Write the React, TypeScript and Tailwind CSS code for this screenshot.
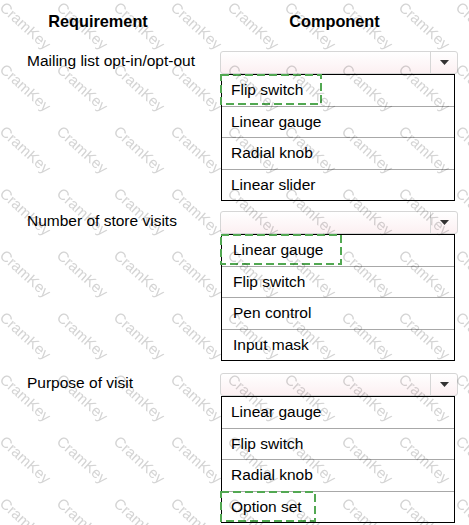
import React from "react";

interface Question {
  label: string;
  options: string[];
  selected: number;
  boxWidth: number;
  indent?: string;
}

const questions: Question[] = [
  {
    label: "Mailing list opt-in/opt-out",
    options: ["Flip switch", "Linear gauge", "Radial knob", "Linear slider"],
    selected: 0,
    boxWidth: 102,
  },
  {
    label: "Number of store visits",
    options: ["Linear gauge", "Flip switch", "Pen control", "Input mask"],
    selected: 0,
    boxWidth: 122,
    indent: "pl-[11px]",
  },
  {
    label: "Purpose of visit",
    options: ["Linear gauge", "Flip switch", "Radial knob", "Option set"],
    selected: 3,
    boxWidth: 96,
  },
];

// watermark grid, "CramKey" tiled diagonally
const marks: { x: number; y: number }[] = [];
for (let r = -1; r < 10; r++) {
  for (let c = -1; c < 10; c++) {
    marks.push({ x: -55 + c * 57, y: -4 + r * 62 });
  }
}

function Combo() {
  return (
    <div className="flex h-[23px] w-[238px] rounded-[3px] border border-[#d6d6d6] bg-linear-to-b from-white to-[#fcf0f2]">
      <div className="flex-1" />
      <div className="flex w-[27px] items-center justify-center border-l border-[#d6d6d6]">
        <svg width="9" height="5" viewBox="0 0 9 5">
          <path d="M0 0 L9 0 L4.5 5 Z" fill="#333" />
        </svg>
      </div>
    </div>
  );
}

function OptionList({ q }: { q: Question }) {
  return (
    <div className="ml-[1px] flex h-[127px] w-[234px] flex-col border border-black">
      {q.options.map((opt, i) => (
        <div
          key={opt}
          className={`relative flex flex-1 items-center ${q.indent ?? "pl-[9px]"} ${
            i > 0 ? "border-t border-[#a8a8a8]" : ""
          }`}
        >
          <span>{opt}</span>
          {i === q.selected && (
            <svg
              className="absolute -left-[2px] -top-[1px]"
              width={q.boxWidth}
              height={31}
            >
              <rect
                x={1}
                y={1}
                width={q.boxWidth - 2}
                height={29}
                fill="none"
                stroke="#52a852"
                strokeWidth={2}
                strokeDasharray="8 4"
              />
            </svg>
          )}
        </div>
      ))}
    </div>
  );
}

export default function App() {
  return (
    <div className="relative h-[525px] w-[469px] overflow-hidden bg-white font-['Liberation_Sans',Arial,sans-serif] text-[15.5px] leading-[18px] text-black">
      <div className="flex h-[51px] pt-[12px] text-[16.3px] font-bold">
        <div className="w-[220px] pr-[24px] text-center">Requirement</div>
        <div className="w-[238px] pr-[9px] text-center">Component</div>
      </div>

      {questions.map((q, i) => (
        <div key={q.label} className={`flex ${i === 1 ? "mt-[10px]" : i === 2 ? "mt-[12px]" : ""}`}>
          <div className="w-[220px] pl-[27px] pt-[1px]">{q.label}</div>
          <div className="flex flex-col">
            <Combo />
            <OptionList q={q} />
          </div>
        </div>
      ))}

      {/* watermark */}
      <div className="pointer-events-none absolute inset-0 mix-blend-multiply">
        {marks.map((m, i) => (
          <span
            key={i}
            className="absolute origin-left rotate-[42deg] whitespace-nowrap text-[15px] text-[#d4d4d4]"
            style={{ left: m.x, top: m.y }}
          >
            CramKey
          </span>
        ))}
      </div>
    </div>
  );
}
